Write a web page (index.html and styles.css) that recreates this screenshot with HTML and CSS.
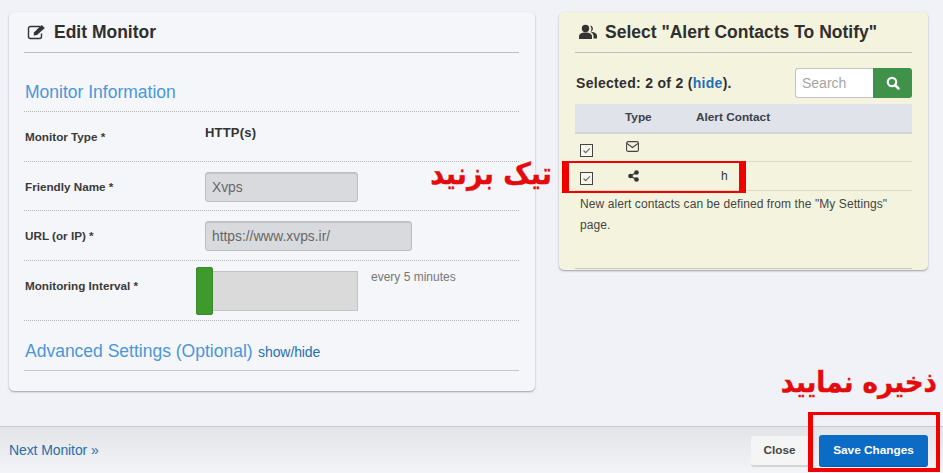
FILE: index.html
```html
<!DOCTYPE html>
<html lang="en">
<head>
<meta charset="utf-8">
<title>Edit Monitor</title>
<link rel="stylesheet" href="styles.css">
</head>
<body>
<div class="page">
  <main class="content">
    <section class="card card-left">
      <h2 class="card-title">
        <svg class="title-icon" width="20" height="16" viewBox="0 0 20 16"><path d="M13 2.500H3.500A2 2 0 0 0 1.500 4.500V12.500A2 2 0 0 0 3.500 14.500H12.500A2 2 0 0 0 14.500 12.500V9.500" fill="none" stroke="#333" stroke-width="1.400"/><path d="M6.500 11.500L7.200 8.300L14.500 1L17.800 3.900L10 11z" fill="#333"/></svg>
        Edit Monitor
      </h2>
      <h3 class="section-head section-info">Monitor Information</h3>
      <div class="form-row row-type"><span class="label">Monitor Type *</span><strong class="value">HTTP(s)</strong></div>
      <div class="form-row row-name"><span class="label">Friendly Name *</span><span class="input input-short">Xvps</span></div>
      <div class="form-row row-url"><span class="label">URL (or IP) *</span><span class="input input-long">https://www.xvps.ir/</span></div>
      <div class="form-row row-interval">
        <span class="label">Monitoring Interval *</span>
        <div class="slider"><span class="slider-handle"></span></div>
        <span class="interval-text">every 5 minutes</span>
      </div>
      <div class="advanced"><span class="section-head">Advanced Settings (Optional)</span> <a class="link show-hide">show/hide</a></div>
    </section>

    <section class="card card-right">
      <h2 class="card-title">
        <svg class="title-icon" width="20" height="16" viewBox="0 0 20 16"><circle cx="7.500" cy="4.500" r="3.700" fill="#333"/><path d="M1 15V12.500C1 10 3.500 8.500 7.500 8.500S14 10 14 12.500V15z" fill="#333"/><path d="M12 1.200A3.500 3.500 0 0 1 13 7.800C16.500 8.200 19 9.500 19 12V14.500H15.500V12C15.500 10.500 14.500 9 12.500 8A6 6 0 0 0 12 1.200z" fill="#333"/></svg>
        Select "Alert Contacts To Notify"
      </h2>
      <div class="select-bar">
        <span class="selected">Selected: 2 of 2 (<a class="link">hide</a>).</span>
        <div class="search">
          <span class="search-input">Search</span>
          <span class="search-btn"><svg width="16" height="16" viewBox="0 0 16 16"><circle cx="7" cy="7" r="4.200" fill="none" stroke="#fff" stroke-width="2.200"/><path d="M10 10L13.500 13.500" stroke="#fff" stroke-width="2.600" stroke-linecap="round"/></svg></span>
        </div>
      </div>
      <div class="table-row table-head"><span></span><span>Type</span><span>Alert Contact</span></div>
      <div class="table-row row-one">
        <span class="check"><svg width="11" height="11" viewBox="0 0 13 13"><path d="M3 6.500L5.500 9L10.500 4" fill="none" stroke="#666" stroke-width="1.300"/></svg></span>
        <span><svg class="type-icon" width="13" height="11" viewBox="0 0 13 11"><rect x=".6" y=".6" width="11.800" height="9.800" rx="1.500" fill="none" stroke="#444" stroke-width="1.100"/><path d="M1 2.500L6.500 6.500L12 2.500" fill="none" stroke="#444" stroke-width="1.100"/></svg></span>
        <span></span>
      </div>
      <div class="table-row row-two">
        <span class="check"><svg width="11" height="11" viewBox="0 0 13 13"><path d="M3 6.500L5.500 9L10.500 4" fill="none" stroke="#666" stroke-width="1.300"/></svg></span>
        <span><svg class="type-icon" width="11" height="12" viewBox="0 0 11 12"><circle cx="2.500" cy="6" r="2.300" fill="#333"/><circle cx="8.500" cy="2.500" r="2.300" fill="#333"/><circle cx="8.500" cy="9.500" r="2.300" fill="#333"/><path d="M8.500 2.500L2.500 6L8.500 9.500" fill="none" stroke="#333" stroke-width="1.300"/></svg></span>
        <span class="contact-name">h</span>
      </div>
      <p class="note">New alert contacts can be defined from the "My Settings" page.</p>
      <div class="card-end"></div>
    </section>
  </main>

  <footer class="footer">
    <a class="link next-link">Next Monitor »</a>
    <div class="footer-actions">
      <span class="btn btn-close">Close</span>
      <span class="btn btn-save">Save Changes</span>
    </div>
  </footer>

  <div class="note-fa note-tick" dir="rtl" lang="fa">تیک بزنید</div>
  <div class="mark mark-row"></div>
  <div class="note-fa note-save" dir="rtl" lang="fa">ذخیره نمایید</div>
  <div class="mark mark-save"></div>
</div>
</body>
</html>
```
FILE: styles.css
```css
* { box-sizing: border-box; }
html, body { margin: 0; padding: 0; }
body {
  font-family: "Liberation Sans", Arial, sans-serif;
  color: #333;
  background: #f0f2f7;
  overflow: hidden;
}
.page {
  position: relative;
  width: 943px;
  height: 473px;
  display: flex;
  flex-direction: column;
}
.content {
  height: 426px;
  padding: 12px 15px 0 9px;
  display: flex;
  align-items: flex-start;
  gap: 24px;
}
.card {
  border-radius: 5px;
  padding: 0 16px 0 15px;
  box-shadow: 0 1px 2px rgba(0, 0, 0, .35);
}
.card-left { width: 526px; height: 379px; background: #f5f6f9; }
.card-right { width: 369px; height: 258px; padding: 0 16px; background: #f4f4de; }
.card-title {
  margin: 0;
  height: 41px;
  padding: 10px 0 0 3px;
  border-bottom: 1px solid #bdbdbd;
  display: flex;
  align-items: flex-start;
  gap: 7px;
  font-size: 17.500px;
  line-height: 21px;
  font-weight: bold;
  color: #2f2f2f;
}
.title-icon { margin-top: 2px; flex: none; }
.section-head { font-size: 17.500px; font-weight: normal; color: #4a96dc; }
.section-info {
  margin: 0;
  height: 59px;
  padding: 29px 0 0 1px;
  line-height: 21px;
  border-bottom: 1px dotted #b5b5b5;
}
.form-row {
  position: relative;
  display: flex;
  align-items: flex-start;
  border-bottom: 1px dotted #b5b5b5;
}
.label {
  width: 181px;
  flex: none;
  padding-left: 1px;
  font-size: 11.700px;
  font-weight: bold;
  color: #3a3a3a;
}
.row-type { height: 50px; padding-top: 18px; }
.row-type .value { font-size: 13px; line-height: 15px; margin-top: -5px; letter-spacing: .2px; }
.row-name { height: 49px; padding-top: 10px; }
.row-url { height: 50px; padding-top: 10px; }
.row-name .label, .row-url .label { line-height: 30px; }
.input {
  height: 30px;
  padding: 0 6px;
  line-height: 29px;
  font-size: 13.800px;
  color: #666;
  background: #d9dadd;
  border: 1px solid #bcbec2;
  border-radius: 3px;
  box-shadow: inset 0 1px 1px rgba(0, 0, 0, .1);
}
.input-short { width: 153px; }
.input-long { width: 207px; }
.row-interval { height: 60px; padding-top: 5px; }
.row-interval .label { width: 172px; padding-top: 12px; line-height: 15px; }
.slider {
  width: 162px;
  height: 40px;
  margin-top: 5px;
  flex: none;
  background: #dadada;
  border: 1px solid #c4c4c4;
  position: relative;
}
.slider-handle {
  position: absolute;
  left: -1px;
  top: -5px;
  width: 17px;
  height: 48px;
  background: #3f9a2e;
  border-radius: 2px;
  border: 1px solid #3a8a2b;
}
.interval-text { margin: 4px 0 0 13px; font-size: 12px; line-height: 14px; color: #777; }
.advanced {
  height: 50px;
  padding: 20px 0 0 1px;
  line-height: 21px;
  border-bottom: 1px solid #c6c6c6;
}
.link { color: #1f6fb5; }
.show-hide { font-size: 14px; margin-left: 1px; letter-spacing: -.1px; }

.select-bar {
  display: flex;
  justify-content: space-between;
  align-items: flex-start;
  height: 51px;
  padding-top: 15px;
}
.selected {
  font-size: 14px;
  font-weight: bold;
  line-height: 30px;
  letter-spacing: .3px;
  padding-left: 1px;
  color: #2f2f2f;
}
.search { display: flex; width: 117px; height: 30px; }
.search-input {
  width: 78px;
  padding-left: 6px;
  line-height: 28px;
  font-size: 14px;
  color: #a5a5a5;
  background: #fff;
  border: 1px solid #c5c5c5;
  border-right: 0;
  border-radius: 3px 0 0 3px;
}
.search-btn {
  width: 39px;
  display: flex;
  align-items: center;
  justify-content: center;
  background: #40914a;
  border-radius: 0 3px 3px 0;
}
.table-row {
  display: grid;
  grid-template-columns: 50px 71px 1fr;
  border-bottom: 1px solid #dcdcc8;
}
.table-head {
  height: 30px;
  line-height: 27px;
  font-size: 11.800px;
  font-weight: bold;
  color: #3c4148;
  background: #e0e3e9;
  border-bottom: 2px solid #d3d5da;
}
.row-one { height: 28px; }
.row-two { height: 29px; }
.check {
  display: block;
  width: 13px;
  height: 13px;
  margin: 10px 0 0 5px;
  background: #f8f8ee;
  border: 1px solid #444;
}
.check svg { display: block; }
.type-icon { display: block; margin-top: 8px; }
.row-one .type-icon { margin-top: 7px; margin-left: 1px; }
.row-two .type-icon { margin-top: 8px; margin-left: 3px; }
.contact-name { font-size: 12px; line-height: 28px; padding-left: 25px; }
.note {
  margin: 0;
  padding: 3px 0 0 5px;
  font-size: 12px;
  line-height: 21px;
  color: #444;
  letter-spacing: .08px;
}
.card-end { margin-top: 32px; border-bottom: 1px solid #c6c6c6; }

.footer {
  height: 47px;
  padding: 8px 15px 0 9px;
  display: flex;
  justify-content: space-between;
  align-items: flex-start;
  border-top: 1px solid #c8cacd;
  background: linear-gradient(#e2e4e7, #f3f4f7);
}
.next-link { font-size: 14px; line-height: 30px; letter-spacing: -.1px; color: #2b6da8; }
.footer-actions { display: flex; gap: 8px; align-items: flex-start; }
.btn {
  font-size: 11.800px;
  font-weight: bold;
  text-align: center;
  border-radius: 3px;
}
.btn-close {
  width: 60px;
  height: 31px;
  margin-top: 1px;
  padding-right: 3px;
  line-height: 28px;
  color: #444;
  background: #f5f5f5;
  border-bottom: 2px solid #d5d5d5;
}
.btn-save {
  width: 109px;
  height: 32px;
  line-height: 30px;
  color: #fff;
  background: #0c6bc4;
  border-bottom: 1px solid #0a5aa5;
}

.note-fa {
  position: absolute;
  font-family: "DejaVu Sans", sans-serif;
  font-weight: bold;
  font-stretch: condensed;
  color: #e30b0b;
  white-space: nowrap;
  line-height: 36px;
  -webkit-text-stroke: .4px #e30b0b;
}
.note-tick { right: 391px; top: 156px; font-size: 30px; }
.note-save { right: 6px; top: 364px; font-size: 29px; }
.mark { position: absolute; border-style: solid; border-color: #f00000; }
.mark-row { left: 562px; top: 161px; width: 184px; height: 32px; border-width: 2px 7px; }
.mark-save { left: 808px; top: 412px; width: 132px; height: 60px; border-width: 3px 4px 4px 5px; }
```
